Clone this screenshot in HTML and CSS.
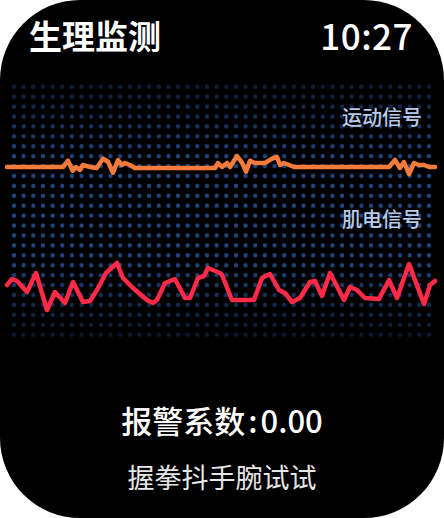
FILE: index.html
```html
<!DOCTYPE html>
<html lang="zh">
<head>
<meta charset="utf-8">
<link rel="stylesheet" href="styles.css">
</head>
<body>
<div class="watch">
  <header class="top">
    <div class="title">生理监测</div>
    <div class="time">10:27</div>
  </header>
  <svg class="chart" viewBox="0 80 444 265" width="444" height="265">
    <defs>
      <pattern id="dots" x="9.17" y="81.74" width="9.65" height="9.92" patternUnits="userSpaceOnUse">
        <circle cx="4.825" cy="4.96" r="2.2" fill="#21457f"/>
      </pattern>
      <linearGradient id="fade" x1="0" y1="0" x2="0" y2="1">
        <stop offset="0" stop-color="#fff" stop-opacity="0.4"/>
        <stop offset="0.3" stop-color="#fff" stop-opacity="1"/>
        <stop offset="0.7" stop-color="#fff" stop-opacity="1"/>
        <stop offset="1" stop-color="#fff" stop-opacity="0.3"/>
      </linearGradient>
      <mask id="m" maskUnits="userSpaceOnUse" x="0" y="80" width="444" height="265">
        <rect x="0" y="82" width="444" height="258" fill="url(#fade)"/>
      </mask>
    </defs>
    <rect x="9" y="82" width="425" height="258" fill="url(#dots)" mask="url(#m)"/>
    <text class="lbl" x="422" y="125" text-anchor="end">运动信号</text>
    <text class="lbl" x="422" y="227" text-anchor="end">肌电信号</text>
    <polyline class="motion" points="7,167 63,167 68,160.7 72.7,170.7 76,167 80,170 83,165 90,167 96.7,168 103,158.7 108,161.7 113,172.7 118,160 121.7,165 125,163 130,165 135,168 215,168 218,163 222,167 227,163 230,167 237,156 242,162.7 246,171.7 250,160.7 255,163 265,163 272,158.7 277,157 280,165 284,163 294,167 389,167 395,160 400,168 404,162 409,174 414,163 419,165 424,165 429,167 435,167"/>
    <polyline class="emg" points="7,285 12,279 17,281 27,292 36,273 47,310 55,292 65,303 73,282 83,302 90,301 97,290 106,273 117,263 123,278 133,288 147,300 153,303 157,300 165,283 175,279 185,298 190,298 198,278 204,276 208,268 220,273 222,275 232,300 254,300 262,278 270,274 279,290 285,293 292,302 300,298 310,282 315,281 322,296 330,273 344,300 350,287 357,290 365,298 379,299 389,280 397,298 409,264 424,304 430,285 435,281"/>
  </svg>
  <div class="alarm">报警系数<span class="colon">:</span>0.00</div>
  <div class="hint">握拳抖手腕试试</div>
</div>
</body>
</html>
```
FILE: styles.css
```css
html, body {
  margin: 0;
  padding: 0;
  background: #ffffff;
}
body {
  width: 444px;
  height: 518px;
  overflow: hidden;
  font-family: "Noto Sans CJK SC", "Noto Sans", sans-serif;
}
.watch {
  width: 444px;
  height: 518px;
  background: #000;
  border-radius: 80px;
  overflow: hidden;
  display: flex;
  flex-direction: column;
  color: #fff;
}
.top {
  display: flex;
  justify-content: space-between;
  align-items: center;
  padding: 15px 31px 0 29px;
  height: 40px;
}
.title {
  font-size: 33px;
  font-weight: 700;
  line-height: 40px;
}
.time {
  font-size: 35px;
  font-weight: 500;
  line-height: 40px;
  letter-spacing: 0.5px;
}
.chart {
  display: block;
  margin-top: 25px;
}
.lbl {
  font-family: "Noto Sans CJK SC", sans-serif;
  font-size: 20px;
  font-weight: 500;
  fill: #b9cbe9;
}
.motion {
  fill: none;
  stroke: #f47b3c;
  stroke-width: 4.5;
  stroke-linejoin: round;
  stroke-linecap: round;
}
.emg {
  fill: none;
  stroke: #ff2a48;
  stroke-width: 4.5;
  stroke-linejoin: round;
  stroke-linecap: round;
}
.alarm {
  margin-top: 55px;
  text-align: center;
  font-size: 31px;
  font-weight: 500;
  line-height: 40px;
  color: #fff;
}
.colon {
  margin: 0 3px;
}
.hint {
  margin-top: 19px;
  text-align: center;
  font-size: 27px;
  line-height: 36px;
  color: #e6e6e6;
}
```
